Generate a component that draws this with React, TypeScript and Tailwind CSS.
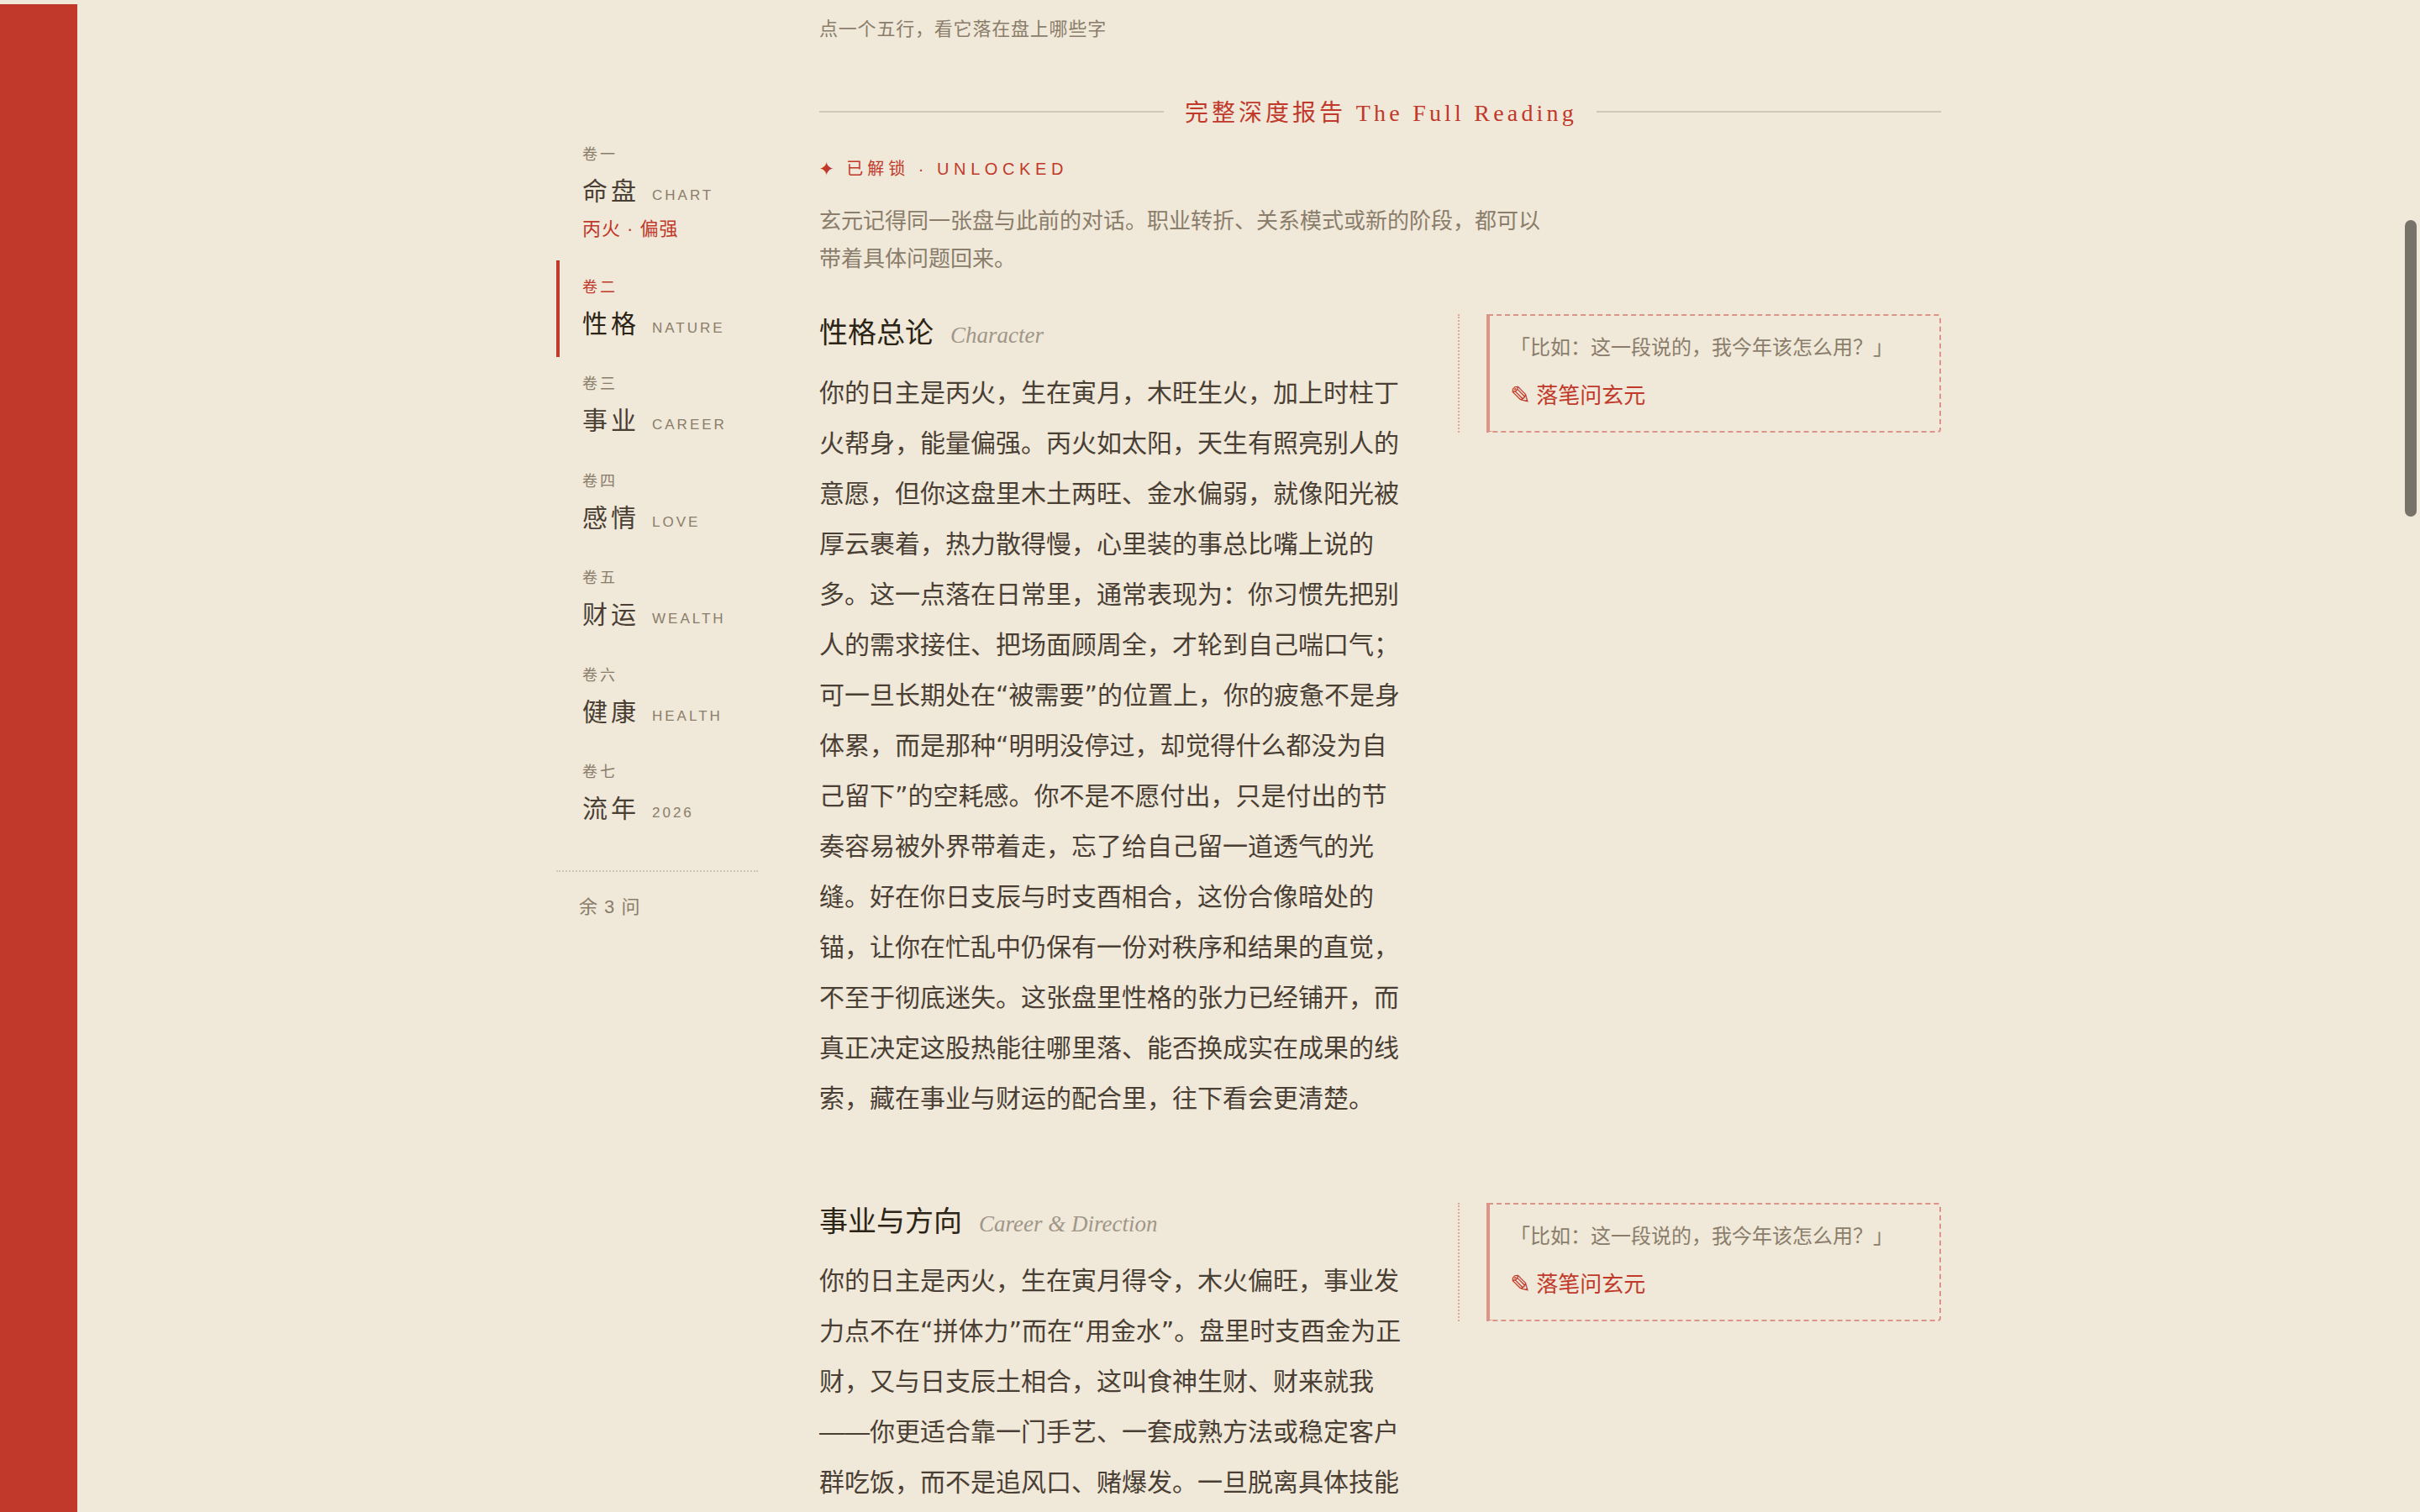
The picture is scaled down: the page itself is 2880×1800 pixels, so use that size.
import type { ReactNode } from "react";

const SANS = "font-['Liberation_Sans','Noto_Sans_CJK_SC',sans-serif]";

const nav = [
  { vol: "卷一", title: "命盘", en: "CHART", sub: "丙火 · 偏强" },
  { vol: "卷二", title: "性格", en: "NATURE", active: true },
  { vol: "卷三", title: "事业", en: "CAREER" },
  { vol: "卷四", title: "感情", en: "LOVE" },
  { vol: "卷五", title: "财运", en: "WEALTH" },
  { vol: "卷六", title: "健康", en: "HEALTH" },
  { vol: "卷七", title: "流年", en: "2026" },
];

function NavItem({ vol, title, en, sub, active }: { vol: string; title: string; en: string; sub?: string; active?: boolean }) {
  return (
    <div className={`border-l-4 pl-[27px] pt-[21px] pb-[17.5px] ${active ? "border-[#c0392b]" : "border-transparent"}`}>
      <div className={`text-[18px] leading-[22px] tracking-[3px] ${active ? "text-[#c0392b]" : "text-[#8a7d6b]"}`}>{vol}</div>
      <div className="mt-[11px] flex items-baseline">
        <span className={`text-[30px] leading-[44px] tracking-[4px] ${active ? "text-[#2c2416]" : "text-[#4a3f35]"}`}>{title}</span>
        <span className="ml-[15px] text-[17px] tracking-[3px] text-[#8a7d6b]">{en}</span>
      </div>
      {sub && <div className="mb-[3px] mt-[7px] text-[22px] leading-[32px] tracking-[1px] text-[#c0392b]">{sub}</div>}
    </div>
  );
}

function Section({ zh, en, children, className }: { zh: string; en: string; children: ReactNode; className?: string }) {
  return (
    <section className={`grid grid-cols-[700px_1fr] items-start gap-x-[60px] ${className ?? ""}`}>
      <div>
        <h3 className="flex items-baseline font-normal">
          <span className="text-[34px] leading-[44px] text-[#2c2416]">{zh}</span>
          <span className="ml-[20px] font-['Liberation_Serif',serif] text-[27px] italic text-[#a0968a]">{en}</span>
        </h3>
        <p className="mt-[18px] font-['DejaVu_Sans','Noto_Sans_CJK_SC',sans-serif] text-[30px] leading-[60px] text-[#4a3f35]">{children}</p>
      </div>
      <aside className="border-l-2 border-dotted border-[#e0a59b] pl-[32px]">
        <div className="h-[141px] rounded-r-[4px] border-2 border-l-4 border-dashed border-[#dc9488] pl-[24px] pt-[20px]" style={{ borderLeftStyle: "solid" }}>
          <div className="text-[24px] leading-[36px] text-[#8a7d6b]">「比如：这一段说的，我今年该怎么用？」</div>
          <div className="mt-[21px] flex items-center text-[26px] leading-[36px] text-[#c0392b]">
            <span className="mr-[6px] font-['DejaVu_Sans',sans-serif] text-[30px] leading-none">✎</span>落笔问玄元
          </div>
        </div>
      </aside>
    </section>
  );
}

export default function App() {
  return (
    <div className={`relative flex h-[1800px] overflow-hidden bg-[#f0e8d8] ${SANS}`}>
      <div className="mt-[5px] w-[92px] shrink-0 bg-[#c0392b]" />
      <div className="flex pl-[570px]">
        <nav className="mr-[73px] w-[240px] shrink-0 pt-[152px]">
          {nav.map((n) => (
            <NavItem key={n.vol} {...n} />
          ))}
          <div className="mt-[33px] border-t-2 border-dotted border-[#cfc8b8] pl-[27px] pt-[26px] text-[22px] leading-[32px] tracking-[1px] text-[#8a7d6b]">
            余 3 问
          </div>
        </nav>
        <main className="w-[1335px] shrink-0 pt-[18px]">
          <p className="text-[22px] leading-[34px] tracking-[0.8px] text-[#8a7d6b]">点一个五行，看它落在盘上哪些字</p>
          <div className="mt-[61px] flex items-center">
            <div className="h-[2px] flex-1 bg-[#cfc8b8]" />
            <h2 className="ml-[25px] mr-[23px] h-[40px] pt-[2px] text-[28px] font-normal leading-[40px] tracking-[4px] text-[#c0392b]">
              完整深度报告 <span className="font-['Liberation_Serif',serif] tracking-[4.2px]">The Full Reading</span>
            </h2>
            <div className="h-[2px] flex-1 bg-[#cfc8b8]" />
          </div>
          <div className="mt-[34px] flex items-center text-[20px] leading-[28px] tracking-[5px] text-[#c0392b]">
            <span className="-ml-[1px] mr-[14px] font-['DejaVu_Sans',sans-serif] text-[23px] tracking-normal">✦</span>
            <span>已解锁 · <span className="tracking-[5.6px]">UNLOCKED</span></span>
          </div>
          <p className="mt-[26px] w-[870px] text-[26px] leading-[45px] text-[#8a7d6b]">
            玄元记得同一张盘与此前的对话。职业转折、关系模式或新的阶段，都可以带着具体问题回来。
          </p>
          <Section className="mt-[43px]" zh="性格总论" en="Character">
            你的日主是丙火，生在寅月，木旺生火，加上时柱丁火帮身，能量偏强。丙火如太阳，天生有照亮别人的意愿，但你这盘里木土两旺、金水偏弱，就像阳光被厚云裹着，热力散得慢，心里装的事总比嘴上说的多。这一点落在日常里，通常表现为：你习惯先把别人的需求接住、把场面顾周全，才轮到自己喘口气；可一旦长期处在“被需要”的位置上，你的疲惫不是身体累，而是那种“明明没停过，却觉得什么都没为自己留下”的空耗感。你不是不愿付出，只是付出的节奏容易被外界带着走，忘了给自己留一道透气的光缝。好在你日支辰与时支酉相合，这份合像暗处的锚，让你在忙乱中仍保有一份对秩序和结果的直觉，不至于彻底迷失。这张盘里性格的张力已经铺开，而真正决定这股热能往哪里落、能否换成实在成果的线索，藏在事业与财运的配合里，往下看会更清楚。
          </Section>
          <Section className="mt-[94px]" zh="事业与方向" en="Career & Direction">
            你的日主是丙火，生在寅月得令，木火偏旺，事业发力点不在“拼体力”而在“用金水”。盘里时支酉金为正财，又与日支辰土相合，这叫食神生财、财来就我<span className="font-['Liberation_Sans',sans-serif]">——</span>你更适合靠一门手艺、一套成熟方法或稳定客户群吃饭，而不是追风口、赌爆发。一旦脱离具体技能
          </Section>
        </main>
      </div>
      <div className="absolute left-[2862px] top-[262px] h-[353px] w-[14px] rounded-full bg-[#77726a]" />
    </div>
  );
}
